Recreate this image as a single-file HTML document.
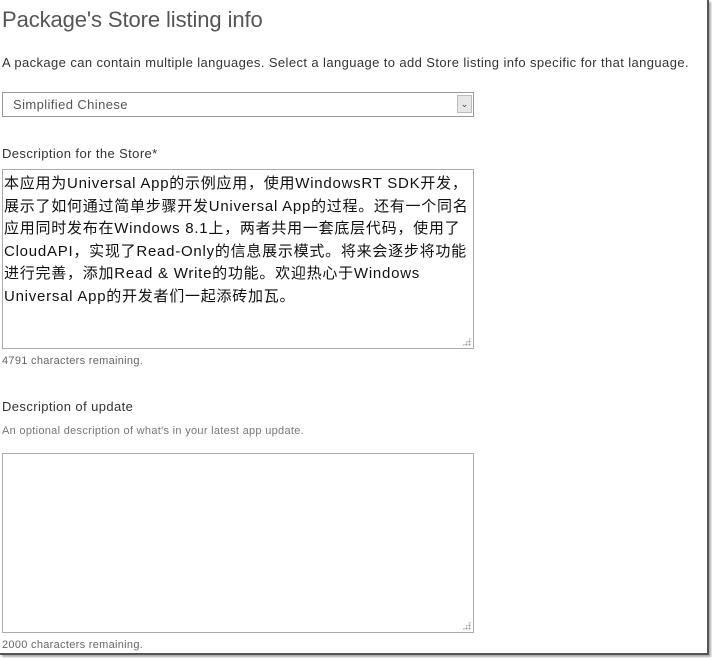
<!DOCTYPE html>
<html><head><style>
body{margin:0;width:712px;height:658px;background:#fff;position:relative;overflow:hidden;font-family:"Liberation Sans","Noto Sans CJK SC",sans-serif;color:#222}
.a{position:absolute;white-space:nowrap}
.frame{position:absolute;left:0;top:0;width:707px;height:653px;border-right:2px solid #555;border-bottom:2px solid #555;box-shadow:2px 2px 2px #aaa}
.ta{position:absolute;left:2px;width:470px;border:1px solid #aaa;background:#fff}
.grip{position:absolute;right:2px;bottom:2px;width:9px;height:9px;background:radial-gradient(circle,#999 0.8px,transparent 1.2px) 0 0/3px 3px;clip-path:polygon(100% 0,100% 100%,0 100%)}
</style></head><body>
<div class="frame"></div>
<div class="a" style="left:2px;top:7px;font-size:22px;font-weight:300;color:#555;letter-spacing:-0.1px">Package's Store listing info</div>
<div class="a" style="left:2px;top:55px;font-size:13px;color:#333;letter-spacing:0.4px">A package can contain multiple languages. Select a language to add Store listing info specific for that language.</div>
<div class="a" style="left:2px;top:92px;width:470px;height:23px;border:1px solid #999;background:#fff">
<span style="position:absolute;left:10px;top:4px;font-size:13px;color:#555;letter-spacing:0.4px">Simplified Chinese</span>
<div style="position:absolute;right:1px;top:2px;width:15px;height:18px;background:#e6e6e6;border:1px solid #bbb;box-sizing:border-box;font-size:9px;text-align:center;line-height:17px;color:#444">&#8964;</div>
</div>
<div class="a" style="left:2px;top:146px;font-size:13px;color:#333;letter-spacing:0.4px">Description for the Store*</div>
<div class="ta" style="top:169px;height:178px">
<div style="padding:3px 1px;font-size:15px;line-height:22.5px;color:#111;white-space:nowrap;letter-spacing:0.75px">本应用为Universal App的示例应用，使用WindowsRT SDK开发，<br>展示了如何通过简单步骤开发Universal App的过程。还有一个同名<br>应用同时发布在Windows 8.1上，两者共用一套底层代码，使用了<br>CloudAPI，实现了Read-Only的信息展示模式。将来会逐步将功能<br>进行完善，添加Read &amp; Write的功能。欢迎热心于Windows<br>Universal App的开发者们一起添砖加瓦。</div>
<div class="grip"></div></div>
<div class="a" style="left:2px;top:355px;font-size:11px;color:#666;letter-spacing:0.3px">4791 characters remaining.</div>
<div class="a" style="left:2px;top:399px;font-size:13px;color:#333;letter-spacing:0.4px">Description of update</div>
<div class="a" style="left:2px;top:425px;font-size:11px;color:#777;letter-spacing:0.3px">An optional description of what's in your latest app update.</div>
<div class="ta" style="top:453px;height:178px"><div class="grip"></div></div>
<div class="a" style="left:2px;top:639px;font-size:11px;color:#666;letter-spacing:0.3px">2000 characters remaining.</div>
</body></html>
